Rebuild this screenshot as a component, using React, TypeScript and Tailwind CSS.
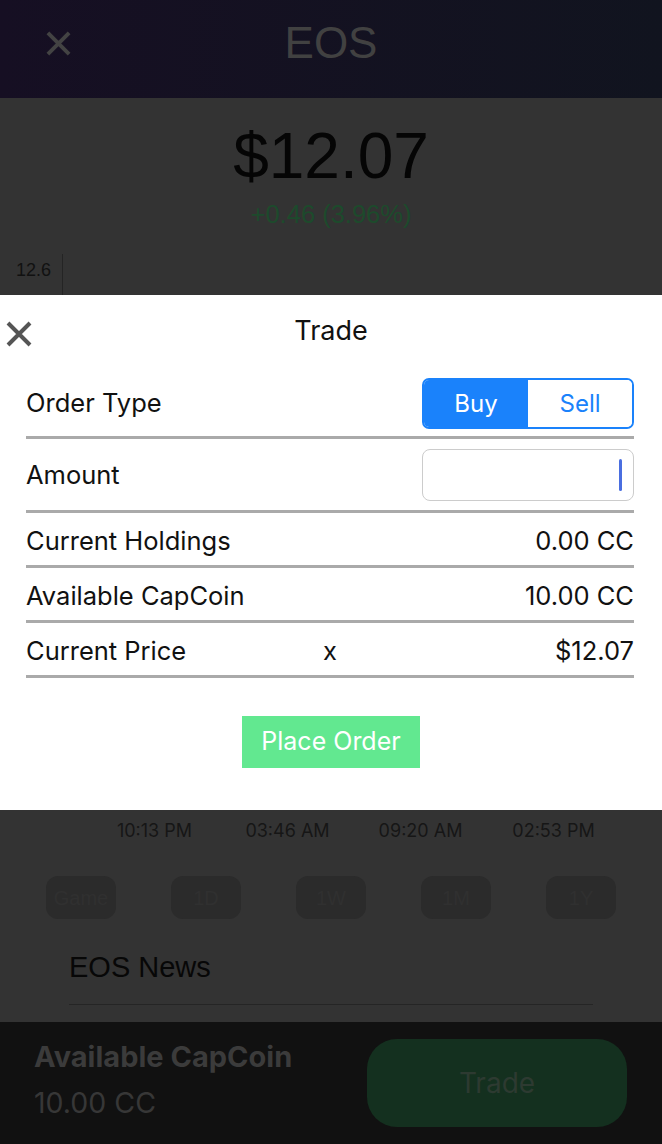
import React from "react";

const times = ["10:13 PM", "03:46 AM", "09:20 AM", "02:53 PM"];
const ranges = ["Game", "1D", "1W", "1M", "1Y"];

function XIcon({ className, stroke }: { className?: string; stroke: string }) {
  return (
    <svg viewBox="0 0 28 28" className={className} fill="none">
      <path d="M3 3 L25 25 M25 3 L3 25" stroke={stroke} strokeWidth="4" strokeLinecap="butt" />
    </svg>
  );
}

function Row({ label, value, middle }: { label: string; value: string; middle?: string }) {
  return (
    <div className="relative flex h-[55px] items-center justify-between border-b-[3px] border-[#aaaaaa] pt-[5px] text-[25.5px] text-[#111]">
      <span>{label}</span>
      {middle && <span className="absolute left-[297px]">{middle}</span>}
      <span>{value}</span>
    </div>
  );
}

export default function App() {
  return (
    <div className="relative h-[1144px] w-[662px] overflow-hidden bg-[#333333] font-['Liberation_Sans',Arial,sans-serif]">
      {/* header */}
      <header className="relative flex h-[98px] items-center justify-center bg-gradient-to-r from-[#160f23] to-[#11141f] pb-[12px]">
        <XIcon className="absolute left-[45px] top-[30px] h-[27px] w-[27px]" stroke="#434343" />
        <h1 className="text-[44px] text-[#414141]">EOS</h1>
      </header>

      {/* price */}
      <div className="flex flex-col items-center pt-[20px]">
        <div className="text-[64px] leading-[76px] text-[#050505]">$12.07</div>
        <div className="mt-[5px] text-[25.5px] leading-[30px] text-[#1d4a2c]">+0.46 (3.96%)</div>
      </div>

      {/* chart */}
      <div className="mt-[25px] flex h-[551px]">
        <div className="w-[62px] pl-[16px] pt-[3px] text-[18px] text-[#111]">12.6</div>
        <div className="mr-[28px] flex-1 border-b border-l border-[#242424]" />
      </div>
      <div className="ml-[88px] grid w-[532px] grid-cols-4 pt-[14px] text-center font-['Inter',sans-serif] text-[18px] leading-[24px] text-[#161616]">
        {times.map((t) => (
          <span key={t}>{t}</span>
        ))}
      </div>

      {/* range tabs */}
      <div className="mt-[33px] flex justify-between px-[46px]">
        {ranges.map((r) => (
          <div
            key={r}
            className="flex h-[43px] w-[70px] items-center justify-center rounded-[12px] bg-[#2b2b2b] text-[20px] text-[#303030]"
          >
            {r}
          </div>
        ))}
      </div>

      {/* news */}
      <div className="mx-[69px] mt-[31px] border-b border-[#252525] pb-[20px] text-[29px] leading-[34px] text-[#070707]">
        EOS News
      </div>

      {/* bottom bar */}
      <div className="absolute bottom-0 left-0 right-0 flex h-[122px] items-center justify-between bg-[#111111] pl-[34px] pr-[35px] font-['Inter',sans-serif]">
        <div className="-mt-[6px] flex flex-col">
          <span className="text-[29px] font-bold leading-[34px] text-[#3b3b3b]">Available CapCoin</span>
          <span className="mt-[12px] text-[28.5px] leading-[34px] text-[#373737]">10.00 CC</span>
        </div>
        <button className="h-[88px] w-[260px] rounded-[30px] bg-[#14301f] text-[28px] text-[#2d3a31]">Trade</button>
      </div>

      {/* trade modal */}
      <div className="absolute left-0 right-0 top-[295px] h-[515px] bg-white font-['Inter',sans-serif]">
        <div className="relative flex h-[72px] items-center justify-center">
          <XIcon className="absolute left-[5px] top-[25px] h-[28px] w-[28px]" stroke="#555555" />
          <span className="text-[27px] text-[#111]">Trade</span>
        </div>
        <div className="ml-[26px] mr-[28px]">
          <div className="flex h-[72px] items-center justify-between border-b-[3px] border-[#aaaaaa] pt-[4px] text-[25.5px] text-[#111]">
            <span>Order Type</span>
            <div className="flex h-[51px] w-[212px] overflow-hidden rounded-[7px] border-2 border-[#1a82fb] text-[24px]">
              <div className="flex w-[104px] items-center justify-center bg-[#1a82fb] text-white">Buy</div>
              <div className="flex flex-1 items-center justify-center bg-white text-[#1a82fb]">Sell</div>
            </div>
          </div>
          <div className="flex h-[74px] items-center justify-between border-b-[3px] border-[#aaaaaa] pt-[1px] text-[25.5px] text-[#111]">
            <span>Amount</span>
            <div className="flex h-[52px] w-[212px] items-center justify-end rounded-[8px] border border-[#cccccc] pr-[11px]">
              <div className="h-[32px] w-[3px] rounded-sm bg-[#4a6ee0]" />
            </div>
          </div>
          <Row label="Current Holdings" value="0.00 CC" />
          <Row label="Available CapCoin" value="10.00 CC" />
          <Row label="Current Price" value="$12.07" middle="x" />
        </div>
        <div className="mt-[38px] flex justify-center">
          <button className="h-[52px] w-[178px] bg-[#62e890] text-[25px] text-white">Place Order</button>
        </div>
      </div>
    </div>
  );
}
